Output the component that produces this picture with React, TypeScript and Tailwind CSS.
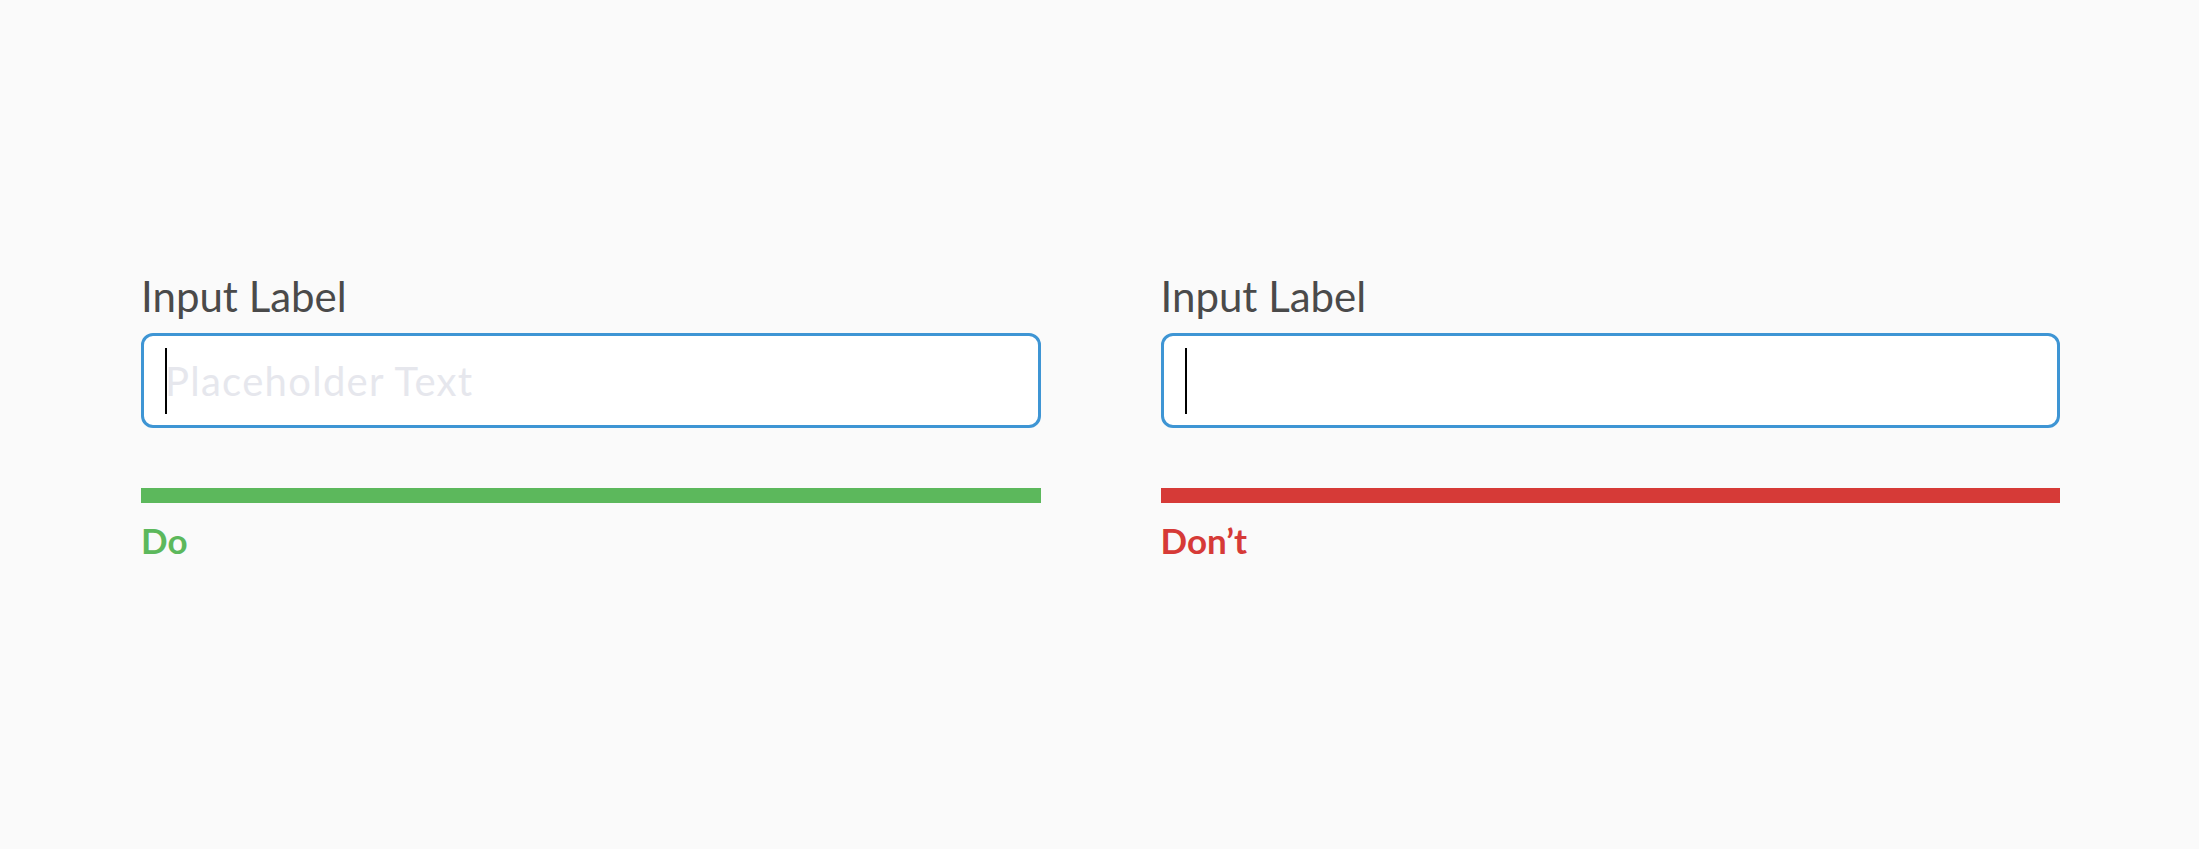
import React from "react";

function Field({ placeholder, ok }: { placeholder?: string; ok: boolean }) {
  return (
    <div className="flex flex-col">
      <div className="text-[42px] leading-[50px] text-[#4a4a4a]">Input Label</div>
      <div className="relative mt-[12px] h-[95px] rounded-[12px] border-[3px] border-[#3e95d4] bg-white pl-[21px] flex items-center">
        <div className="text-[40px] leading-[48px] tracking-[1.3px] text-[#e6e7ed] pt-[1px]">{placeholder ?? "\u00a0"}</div>
        <div className="absolute left-[21px] top-[12px] h-[66px] w-[2px] bg-black" />
      </div>
      <div className={`mt-[60px] h-[15px] ${ok ? "bg-[#5cb85c]" : "bg-[#d63a37]"}`} />
      <div className={`mt-[16px] text-[35px] leading-[42px] font-bold ${ok ? "text-[#5cb85c]" : "text-[#d63a37]"}`}>
        {ok ? "Do" : "Don\u2019t"}
      </div>
    </div>
  );
}

export default function App() {
  return (
    <div
      className="w-[2199px] h-[849px] bg-[#fafafa] overflow-hidden"
      style={{ fontFamily: "Lato, 'Open Sans', sans-serif" }}
    >
      <div className="grid grid-cols-2 gap-x-[120px] pl-[141px] pr-[139px] pt-[271px]">
        <Field placeholder="Placeholder Text" ok={true} />
        <Field ok={false} />
      </div>
    </div>
  );
}
